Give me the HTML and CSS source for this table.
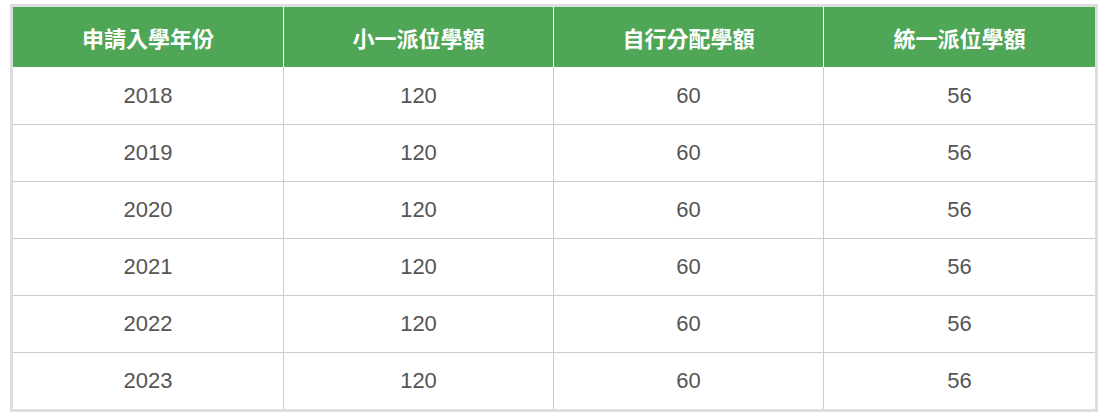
FILE: index.html
```html
<!DOCTYPE html>
<html lang="zh-Hant">
<head>
<meta charset="utf-8">
<link rel="stylesheet" href="styles.css">
</head>
<body>
<div class="frame">
<table class="quota">
<colgroup><col class="c"><col class="c"><col class="c"><col class="c-last"></colgroup>
<thead>
<tr><th>申請入學年份</th><th>小一派位學額</th><th>自行分配學額</th><th>統一派位學額</th></tr>
</thead>
<tbody>
<tr><td>2018</td><td>120</td><td>60</td><td>56</td></tr>
<tr><td>2019</td><td>120</td><td>60</td><td>56</td></tr>
<tr><td>2020</td><td>120</td><td>60</td><td>56</td></tr>
<tr><td>2021</td><td>120</td><td>60</td><td>56</td></tr>
<tr><td>2022</td><td>120</td><td>60</td><td>56</td></tr>
<tr><td>2023</td><td>120</td><td>60</td><td>56</td></tr>
</tbody>
</table>
</div>
</body>
</html>
```
FILE: styles.css
```css
html, body { margin: 0; padding: 0; background: #fff; }
body { font-family: "Liberation Sans", Arial, "Noto Sans CJK TC", sans-serif; }
.frame {
  margin: 4px 0 0 10px;
  width: 1082px;
  border: 3px solid #dddddd;
}
.quota {
  width: 100%;
  border-collapse: separate;
  border-spacing: 0;
  table-layout: fixed;
}
.quota .c { width: 270px; }
.quota .c-last { width: 272px; }
.quota th {
  background: #4ea656;
  color: #fff;
  font-weight: bold;
  font-size: 22px;
  height: 60px;
  padding: 0;
  text-align: center;
  vertical-align: middle;
}
.quota th + th { border-left: 1px solid #fff; }
.quota td {
  color: #555;
  font-size: 22px;
  height: 56px;
  padding: 0;
  text-align: center;
  vertical-align: middle;
}
.quota td + td { border-left: 1px solid #cccccc; }
.quota tbody tr + tr td { border-top: 1px solid #cccccc; }
.quota tbody tr:first-child td { height: 57px; }
```
